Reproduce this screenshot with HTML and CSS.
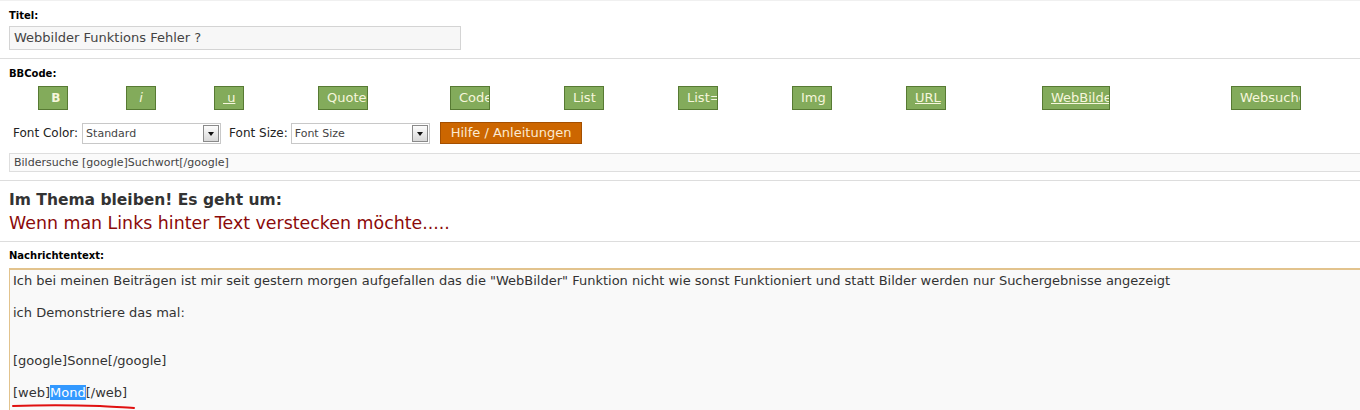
FILE: index.html
```html
<!DOCTYPE html>
<html>
  <head>
    <meta charset="utf-8">
    <title>Beitrag bearbeiten</title>
    <link rel="stylesheet" href="styles.css">
  </head>
  <body>
    <div class="form">
      <div class="row">
        <div class="label">Titel:</div>
        <div class="title-input">Webbilder Funktions Fehler ?</div>
      </div>
      <div class="row">
        <div class="label">BBCode:</div>
        <div class="bbcodes">
          <span class="bb w30"><b>&nbsp;B</b></span>
          <span class="bb w30"><i>i</i></span>
          <span class="bb w30"><u>&nbsp;u</u></span>
          <span class="bb w50">Quote</span>
          <span class="bb w40">Code</span>
          <span class="bb w40">List</span>
          <span class="bb w40">List=</span>
          <span class="bb w40">Img</span>
          <span class="bb w40"><u>URL</u></span>
          <span class="bb w68"><u>WebBilder</u></span>
          <span class="bb w70">Websuche</span>
        </div>
        <div class="fontrow">
          <span class="flabel">Font Color:</span>
          <span class="sel">Standard<span class="arrow"></span></span>
          <span class="flabel">Font Size:</span>
          <span class="sel">Font Size<span class="arrow"></span></span>
          <span class="help">Hilfe / Anleitungen</span>
        </div>
        <div class="hint">Bildersuche [google]Suchwort[/google]</div>
      </div>
      <div class="row topic">
        <div class="topic-head">Im Thema bleiben! Es geht um:</div>
        <div class="topic-name">Wenn man Links hinter Text verstecken möchte.....</div>
      </div>
      <div class="row last">
        <div class="label">Nachrichtentext:</div>
        <div class="message">
          <p>Ich bei meinen Beiträgen ist mir seit gestern morgen aufgefallen das die "WebBilder" Funktion nicht wie sonst Funktioniert und statt Bilder werden nur Suchergebnisse angezeigt</p>
          <p class="gap">ich Demonstriere das mal:</p>
          <p>[google]Sonne[/google]</p>
          <p>[web]<span class="sel-text">Mond</span>[/web]</p>
        </div>
        <svg class="scribble" width="140" height="12" viewBox="0 0 140 12">
          <path d="M3 5 C30 4 60 4 90 5 C105 6 115 6 124 7" stroke="#e01010" stroke-width="2" fill="none" stroke-linecap="round"/>
        </svg>
      </div>
    </div>
  </body>
</html>
```
FILE: styles.css
```css
  *{
    margin: 0;
    padding: 0;
  }
  body{
    background: #fff;
    font-family: "DejaVu Sans", Verdana, sans-serif;
    color: #333;
    overflow: hidden;
  }
  .form{
    border-top: 1px solid #f0f0f0;
  }
  .row{
    padding: 9px 0 8px 9px;
    border-bottom: 1px solid #ddd;
  }
  .label{
    font-size: 10px;
    font-weight: bold;
    color: #000;
    line-height: 12px;
    height: 12px;
  }
  .title-input{
    margin-top: 4px;
    width: 446px;
    height: 22px;
    line-height: 22px;
    padding-left: 4px;
    border: 1px solid #d4d4d4;
    background: #f7f7f7;
    font-size: 13px;
    color: #444;
  }
  .bbcodes{
    display: grid;
    grid-template-columns: 88px 88px 104px 132px 114px 114px 114px 114px 136px 189px auto;
    margin: 6px 0 0 29px;
    align-items: start;
  }
  .bb{
    display: block;
    height: 22px;
    line-height: 22px;
    padding: 0 8px;
    background: #83ab5b;
    border: 1px solid #577a33;
    color: #f6f6dc;
    font-size: 13px;
    text-align: center;
    white-space: nowrap;
    overflow: hidden;
  }
  .bb b{ font-size: 12px; }
  .w30{ width: 12px; }
  .w40{ width: 22px; }
  .w50{ width: 32px; }
  .w68{ width: 50px; }
  .w70{ width: 52px; }
  .fontrow{
    display: flex;
    align-items: center;
    margin-top: 12px;
    padding-left: 4px;
    font-size: 12px;
    color: #222;
  }
  .flabel{
    margin-right: 4px;
  }
  .sel{
    position: relative;
    width: 134px;
    height: 19px;
    line-height: 19px;
    padding-left: 3px;
    margin-right: 8px;
    border: 1px solid #c8c8c8;
    background: #fff;
    color: #444;
    font-size: 11px;
  }
  .sel + .flabel{
    margin-right: 3px;
  }
  .arrow{
    position: absolute;
    right: 1px;
    top: 1px;
    width: 14px;
    height: 15px;
    border: 1px solid #8a8a8a;
    background: linear-gradient(#fdfdfd, #d8d8d8);
  }
  .arrow::after{
    content: "";
    position: absolute;
    left: 4px;
    top: 6px;
    border-left: 3px solid transparent;
    border-right: 3px solid transparent;
    border-top: 4px solid #111;
  }
  .help{
    margin-left: 2px;
    height: 20px;
    line-height: 20px;
    padding: 0 10px;
    background: #cc6600;
    border: 1px solid #a44f00;
    color: #fbead2;
    font-size: 13px;
  }
  .hint{
    margin-top: 9px;
    height: 17px;
    line-height: 17px;
    padding-left: 4px;
    border: 1px solid #dedede;
    border-right: none;
    background: #fafafa;
    font-size: 11px;
    color: #444;
  }
  .topic{
    padding-top: 8px;
    padding-bottom: 6px;
  }
  .topic-head{
    font-size: 15.5px;
    font-weight: bold;
    color: #333;
    line-height: 22px;
  }
  .topic-name{
    font-size: 17.4px;
    color: #8b0a0a;
    line-height: 24px;
  }
  .last{
    position: relative;
    border-bottom: none;
    padding-top: 8px;
  }
  .message{
    margin-top: 6px;
    height: 200px;
    padding: 3px 0 0 3px;
    border-top: 2px solid #e2c38d;
    border-left: 1px solid #e2c38d;
    background: #f9f9f9;
    font-size: 13px;
    line-height: 16px;
    color: #333;
  }
  .message p{
    margin-bottom: 16px;
    white-space: nowrap;
  }
  .message p.gap{
    margin-bottom: 32px;
  }
  .sel-text{
    background: #3399ff;
    color: #fff;
  }
  .scribble{
    position: absolute;
    left: 10px;
    top: 159px;
  }
```
